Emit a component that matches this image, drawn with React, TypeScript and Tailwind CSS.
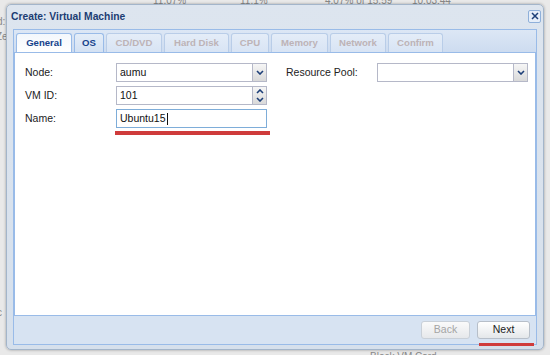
import React from "react";

const tabs = [
  { label: "General", w: "w-[56px]", active: true, enabled: true },
  { label: "OS", w: "w-[30px]", active: false, enabled: true },
  { label: "CD/DVD", w: "w-[56px]", active: false, enabled: false },
  { label: "Hard Disk", w: "w-[65px]", active: false, enabled: false },
  { label: "CPU", w: "w-[38px]", active: false, enabled: false },
  { label: "Memory", w: "w-[57px]", active: false, enabled: false },
  { label: "Network", w: "w-[56px]", active: false, enabled: false },
  { label: "Confirm", w: "w-[55px]", active: false, enabled: false },
];

const Chevron = ({ up = false }: { up?: boolean }) => (
  <svg width="8" height="5" viewBox="0 0 8 5" className={up ? "rotate-180" : ""}>
    <path d="M1 1 L4 4 L7 1" fill="none" stroke="#1d3f78" strokeWidth="1.6" />
  </svg>
);

const ComboField = ({ value }: { value: string }) => (
  <div className="flex h-[19px] w-[151px] border border-[#b5b8c8] bg-white">
    <div className="flex flex-1 items-center pl-[3px] text-[10.5px] text-[#111]">{value}</div>
    <div className="flex w-[14px] items-center justify-center border-l border-[#b5b8c8] bg-gradient-to-b from-[#f6f6f6] to-[#d9d9d9]">
      <Chevron />
    </div>
  </div>
);

export default function App() {
  return (
    <div
      className="relative h-[355px] w-[550px] overflow-hidden bg-[#e9e9e9]"
      style={{ fontFamily: '"Liberation Sans", Arial, sans-serif' }}
    >
      {/* page behind the dialog */}
      <span className="absolute left-[153px] top-[-7px] text-[10px] text-[#888]">11.07%</span>
      <span className="absolute left-[240px] top-[-7px] text-[10px] text-[#888]">11.1%</span>
      <span className="absolute left-[325px] top-[-7px] text-[10px] text-[#888]">4.07% of 15.59</span>
      <span className="absolute left-[412px] top-[-7px] text-[10px] text-[#888]">10:03:44</span>
      <span className="absolute left-[-3px] top-[14px] text-[10px] text-[#888]">d:</span>
      <span className="absolute left-[-4px] top-[29px] text-[10px] text-[#888]">Ze</span>
      <span className="absolute left-[-3px] top-[305px] text-[10px] text-[#888]">c</span>
      <span className="absolute left-[370px] top-[349px] text-[10px] text-[#888]">Block VM Card...</span>

      <div className="absolute left-[6px] top-[4px] flex h-[346px] w-[538px] flex-col rounded-[5px] border border-[#a3b5ca] bg-gradient-to-b from-[#dde5ef] to-[#d6e0ec] shadow-[0_0_3px_rgba(0,0,0,0.35)]">
        <div className="flex h-[24px] items-center justify-between pl-[4px] pr-[2px]">
          <span className="text-[10.3px] font-bold text-[#1c3d73]">Create: Virtual Machine</span>
          <div className="mt-[-2px] flex h-[13px] w-[13px] items-center justify-center rounded-[2px] border border-[#8fb0da] bg-[#e6eef9]">
            <svg width="8" height="8" viewBox="0 0 8 8">
              <path d="M1 1 L7 7 M7 1 L1 7" stroke="#1d3f78" strokeWidth="1.5" />
            </svg>
          </div>
        </div>

        <div className="mx-[6px] mb-[4px] flex flex-1 flex-col border border-[#99bbe8] bg-[#d7e3f2]">
          <div className="flex h-[22px] items-end gap-[2px] bg-gradient-to-b from-[#dce7f5] to-[#cddcf0] pl-[2px]">
            {tabs.map((t) => (
              <div
                key={t.label}
                className={`${t.w} flex h-[19px] items-center justify-center rounded-t-[3px] border border-b-0 text-[9.6px] font-bold ${
                  t.active
                    ? "border-[#99bbe8] bg-gradient-to-b from-[#f3f7fc] to-white text-[#15428b]"
                    : t.enabled
                    ? "border-[#99bbe8] bg-gradient-to-b from-[#e4edf8] to-[#d3e1f3] text-[#15428b]"
                    : "border-[#b9cde8] bg-gradient-to-b from-[#e4edf8] to-[#d8e4f4] text-[#bdb3b6]"
                }`}
              >
                {t.label}
              </div>
            ))}
          </div>

          <div className="relative flex flex-1 gap-[19px] border border-[#99bbe8] bg-white pl-[10px] pt-[10px]">
            <div className="flex flex-col gap-[4px]">
              <div className="flex items-center">
                <span className="w-[91px] text-[10.5px] text-[#222]">Node:</span>
                <ComboField value="aumu" />
              </div>
              <div className="flex items-center">
                <span className="w-[91px] text-[10.5px] text-[#222]">VM ID:</span>
                <div className="flex h-[19px] w-[151px] border border-[#b5b8c8] bg-white">
                  <div className="flex flex-1 items-center pl-[3px] text-[10.5px] text-[#111]">101</div>
                  <div className="flex w-[14px] flex-col border-l border-[#b5b8c8] bg-gradient-to-b from-[#f6f6f6] to-[#d9d9d9]">
                    <div className="flex flex-1 items-center justify-center">
                      <Chevron up />
                    </div>
                    <div className="flex flex-1 items-center justify-center">
                      <Chevron />
                    </div>
                  </div>
                </div>
              </div>
              <div className="flex items-center">
                <span className="w-[91px] text-[10.5px] text-[#222]">Name:</span>
                <div className="flex h-[19px] w-[151px] items-center border border-[#7eadd9] bg-white pl-[3px] text-[10.5px] text-[#111]">
                  Ubuntu15
                  <span className="ml-[1px] h-[12px] w-px bg-[#111]" />
                </div>
              </div>
            </div>
            <div className="flex items-start">
              <div className="flex items-center">
                <span className="w-[91px] text-[10.5px] text-[#222]">Resource Pool:</span>
                <ComboField value="" />
              </div>
            </div>
          </div>

          <div className="flex h-[28px] items-center justify-end gap-[7px] pr-[6px]">
            <div className="flex h-[18px] w-[49px] items-center justify-center rounded-[3px] border border-[#c9d0d8] bg-gradient-to-b from-[#fafafa] to-[#e6e8eb] text-[10.5px] text-[#a4a4a4]">
              Back
            </div>
            <div className="flex h-[18px] w-[53px] items-center justify-center rounded-[3px] border border-[#b7bfc9] bg-gradient-to-b from-white to-[#e4e7ea] text-[10.5px] text-[#222]">
              Next
            </div>
          </div>
        </div>

        {/* red annotation marks */}
        <div className="absolute left-[108px] top-[126px] h-[4px] w-[155px] bg-[#cf3b3b]" />
        <div className="absolute left-[472px] top-[338px] h-[3px] w-[55px] bg-[#cf3b3b]" />
      </div>
    </div>
  );
}
